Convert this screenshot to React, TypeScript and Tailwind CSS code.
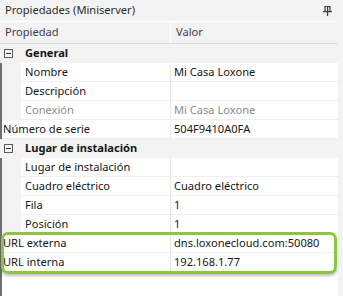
import React from 'react';

type Row =
  | { kind: 'group'; label: string }
  | { kind: 'prop'; label: string; value: string; indent?: boolean; muted?: boolean };

const rows: Row[] = [
  { kind: 'group', label: 'General' },
  { kind: 'prop', label: 'Nombre', value: 'Mi Casa Loxone', indent: true },
  { kind: 'prop', label: 'Descripción', value: '', indent: true },
  { kind: 'prop', label: 'Conexión', value: 'Mi Casa Loxone', indent: true, muted: true },
  { kind: 'prop', label: 'Número de serie', value: '504F9410A0FA' },
  { kind: 'group', label: 'Lugar de instalación' },
  { kind: 'prop', label: 'Lugar de instalación', value: '', indent: true },
  { kind: 'prop', label: 'Cuadro eléctrico', value: 'Cuadro eléctrico', indent: true },
  { kind: 'prop', label: 'Fila', value: '1', indent: true },
  { kind: 'prop', label: 'Posición', value: '1', indent: true },
  { kind: 'prop', label: 'URL externa', value: 'dns.loxonecloud.com:50080' },
  { kind: 'prop', label: 'URL interna', value: '192.168.1.77' },
];

function PinIcon() {
  return (
    <svg width="9" height="10" viewBox="0 0 9 10" className="text-[#3c3c3c]">
      <rect x="0" y="5" width="9" height="1.2" fill="currentColor" />
      <rect x="2" y="0.5" width="5" height="5" fill="none" stroke="currentColor" strokeWidth="1.2" />
      <rect x="4" y="0.5" width="1.2" height="5" fill="currentColor" />
      <rect x="4" y="6" width="1.2" height="4" fill="currentColor" />
    </svg>
  );
}

function MinusBox() {
  return (
    <div className="w-[9px] h-[9px] border border-[#5a5a5a] flex items-center justify-center bg-[#f5f5f5]">
      <div className="w-[5px] h-px bg-[#333]" />
    </div>
  );
}

export default function App() {
  return (
    <div
      className="w-[343px] h-[296px] bg-[#f3f3f3] overflow-hidden relative text-[11.1px] text-[#161616]"
      style={{ fontFamily: '"Noto Sans", "Open Sans", sans-serif' }}
    >
      {/* Title */}
      <div className="h-[21px] flex items-center justify-between pl-[5px] pr-[11px] text-[#2b2b2b]">
        <span>Propiedades (Miniserver)</span>
        <PinIcon />
      </div>

      <div className="w-[338px] border-t border-white">
        {/* Header */}
        <div className="h-[22px] flex border-b border-[#dcdcdc] text-[#3b3b4f]">
          <div className="w-[171px] pl-[5px] flex items-center border-r border-white">Propiedad</div>
          <div className="flex-1 pl-[5px] flex items-center">Valor</div>
        </div>

        {/* Body */}
        <div className="border-l-2 border-[#6e6e6e] bg-white h-[300px]">
          {rows.map((r, i) =>
            r.kind === 'group' ? (
              <div key={i} className="h-[19px] flex items-center bg-[#f3f3f3] font-bold -ml-[2px]">
                <div className="w-[23px] pl-[4px] flex items-center">
                  <MinusBox />
                </div>
                <span className="pl-[2px]">{r.label}</span>
              </div>
            ) : (
              <div key={i} className="h-[19px] flex bg-[#f3f3f3]">
                {r.indent && <div className="w-[19px] shrink-0" />}
                <div className="flex-1 flex bg-white border-b border-[#efefef]">
                  <div
                    className={`${r.indent ? 'w-[150px] pl-[4px]' : 'w-[169px] pl-[1px]'} flex items-center border-r border-[#e8e8e8] ${r.muted ? 'text-[#8c8c8c]' : ''}`}
                  >
                    {r.label}
                  </div>
                  <div className={`flex-1 pl-[3px] flex items-center ${r.muted ? 'text-[#8c8c8c]' : ''}`}>
                    {r.value}
                  </div>
                </div>
              </div>
            )
          )}
        </div>
      </div>

      {/* Highlight */}
      <div className="absolute left-[1px] top-[232px] w-[336px] h-[42px] border-[3px] border-[#8cc63f] rounded-[7px] shadow-[0_2px_3px_rgba(0,0,0,0.25)]" />
    </div>
  );
}
